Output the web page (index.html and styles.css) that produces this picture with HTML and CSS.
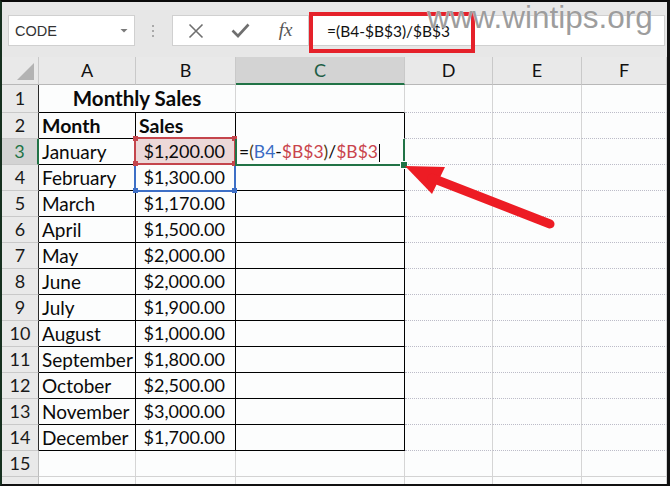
FILE: index.html
```html
<!DOCTYPE html>
<html>
<head>
<meta charset="utf-8">
<link rel="stylesheet" href="styles.css">
</head>
<body>
<div class="frame">
  <div class="toolbar">
    <div class="namebox"><span class="name">CODE</span><span class="caret"></span></div>
    <div class="grip"><i></i><i></i><i></i></div>
    <div class="fbtns">
      <span class="slot"><svg width="16" height="16" viewBox="0 0 16 16"><path d="M1.5 1.5 L14.5 14.5 M14.5 1.5 L1.5 14.5" stroke="#6f6f6f" stroke-width="1.6" fill="none"/></svg></span>
      <span class="slot"><svg width="19" height="15" viewBox="0 0 19 15"><path d="M1.5 7.5 L7 13 L17.5 1.5" stroke="#6f6f6f" stroke-width="2.6" fill="none"/></svg></span>
      <span class="slot fx">fx</span>
    </div>
    <div class="finput"><span class="ftext">=(B4-$B$3)/$B$3</span></div>
  </div>

  <div class="sheet">
    <div class="hd corner"><i class="tri"></i></div>
    <div class="hd">A</div><div class="hd">B</div><div class="hd sel">C</div><div class="hd">D</div><div class="hd">E</div><div class="hd">F</div>

    <div class="rh dk r1">1</div>
    <div class="c r1 mrg">Monthly Sales</div><div class="c r1 bb"></div><div class="c r1"></div><div class="c r1"></div><div class="c r1"></div>

    <div class="rh dk">2</div>
    <div class="c t b">Month</div><div class="c t b">Sales</div><div class="c t nob"></div><div class="c"></div><div class="c"></div><div class="c"></div>

    <div class="rh dk on">3</div>
    <div class="c t">January</div><div class="c t num pink">$1,200.00</div><div class="c t edit">=<span class="par">(</span><span class="blu">B4</span>-<span class="red">$B$3</span><span class="par">)</span>/<span class="red">$B$3</span></div><div class="c"></div><div class="c"></div><div class="c"></div>

    <div class="rh dk">4</div>
    <div class="c t">February</div><div class="c t num">$1,300.00</div><div class="c t"></div><div class="c"></div><div class="c"></div><div class="c"></div>

    <div class="rh dk">5</div>
    <div class="c t">March</div><div class="c t num">$1,170.00</div><div class="c t"></div><div class="c"></div><div class="c"></div><div class="c"></div>

    <div class="rh dk">6</div>
    <div class="c t">April</div><div class="c t num">$1,500.00</div><div class="c t"></div><div class="c"></div><div class="c"></div><div class="c"></div>

    <div class="rh dk">7</div>
    <div class="c t">May</div><div class="c t num">$2,000.00</div><div class="c t"></div><div class="c"></div><div class="c"></div><div class="c"></div>

    <div class="rh dk">8</div>
    <div class="c t">June</div><div class="c t num">$2,000.00</div><div class="c t"></div><div class="c"></div><div class="c"></div><div class="c"></div>

    <div class="rh dk">9</div>
    <div class="c t">July</div><div class="c t num">$1,900.00</div><div class="c t"></div><div class="c"></div><div class="c"></div><div class="c"></div>

    <div class="rh dk">10</div>
    <div class="c t">August</div><div class="c t num">$1,000.00</div><div class="c t"></div><div class="c"></div><div class="c"></div><div class="c"></div>

    <div class="rh dk">11</div>
    <div class="c t">September</div><div class="c t num">$1,800.00</div><div class="c t"></div><div class="c"></div><div class="c"></div><div class="c"></div>

    <div class="rh dk">12</div>
    <div class="c t">October</div><div class="c t num">$2,500.00</div><div class="c t"></div><div class="c"></div><div class="c"></div><div class="c"></div>

    <div class="rh dk">13</div>
    <div class="c t">November</div><div class="c t num">$3,000.00</div><div class="c t"></div><div class="c"></div><div class="c"></div><div class="c"></div>

    <div class="rh dk">14</div>
    <div class="c t">December</div><div class="c t num">$1,700.00</div><div class="c t"></div><div class="c"></div><div class="c"></div><div class="c"></div>

    <div class="rh">15</div>
    <div class="c s"></div><div class="c s"></div><div class="c s"></div><div class="c s"></div><div class="c s"></div><div class="c s"></div>

    <div class="rh last"></div>
    <div class="c last"></div><div class="c last"></div><div class="c last"></div><div class="c last"></div><div class="c last"></div><div class="c last"></div>
  </div>

  <div class="selbox blue"><i class="h bl"></i><i class="h br"></i></div>
  <div class="selbox redr"><i class="h tl"></i><i class="h tr"></i><i class="h bl"></i><i class="h br"></i></div>
  <div class="selbox green"><i class="fill"></i></div>
  <div class="cursor"></div>

  <div class="redbox"></div>
  <div class="watermark">www.wintips.org</div>

  <svg class="arrow" width="670" height="486" viewBox="0 0 670 486">
    <polygon points="405,166 445,167 432,194" fill="#ed1c24"/>
    <line x1="432" y1="178" x2="550" y2="224" stroke="#ed1c24" stroke-width="9" stroke-linecap="round"/>
  </svg>
</div>
</body>
</html>
```

FILE: styles.css
```css
html, body {
  margin: 0;
  padding: 0;
  background: #fff;
}

.frame {
  position: relative;
  width: 670px;
  height: 486px;
  box-sizing: border-box;
  border-top: 2px solid #0a0a0a;
  border-left: 2px solid #16301f;
  border-right: 3px solid #111;
  border-bottom: 2px solid #111;
  background: #e7e7e7;
  overflow: hidden;
  font-family: "Lato", "Carlito", sans-serif;
}

/* ---------- toolbar ---------- */
.toolbar {
  height: 55px;
  box-sizing: border-box;
  padding-top: 13px;
  display: flex;
  align-items: flex-start;
  background: #e7e7e7;
}

.namebox {
  margin-left: 6px;
  width: 127px;
  height: 31px;
  box-sizing: border-box;
  border: 1px solid #d0d0d0;
  background: #fff;
  display: flex;
  align-items: center;
  padding-left: 6px;
}

.name {
  font-family: "Liberation Sans", Arial, sans-serif;
  font-size: 14.5px;
  color: #333;
}

.caret {
  margin-left: auto;
  margin-right: 6px;
  width: 8px;
  height: 4px;
  background: #7a7a7a;
  clip-path: polygon(0 0, 100% 0, 50% 100%);
}

.grip {
  margin-left: 17px;
  margin-top: 10px;
  width: 2px;
  display: flex;
  flex-direction: column;
  gap: 3px;
}

.grip i {
  display: block;
  width: 2px;
  height: 2px;
  background: #a9a9a9;
}

.fbtns {
  margin-left: 18px;
  width: 137px;
  height: 31px;
  box-sizing: border-box;
  border: 1px solid #d0d0d0;
  background: #fff;
  display: flex;
}

.slot {
  width: 45px;
  display: flex;
  align-items: center;
  justify-content: center;
}

.fx {
  font-family: "Liberation Serif", "Times New Roman", serif;
  font-style: italic;
  font-size: 19px;
  color: #555;
  padding-bottom: 2px;
}

.finput {
  margin-left: 2px;
  margin-right: 2px;
  flex: 1;
  height: 31px;
  box-sizing: border-box;
  border: 1px solid #d0d0d0;
  background: #fff;
  padding-left: 15px;
  line-height: 29px;
}

.ftext {
  font-size: 15.5px;
  color: #111;
}

/* ---------- sheet grid ---------- */
.sheet {
  display: grid;
  grid-template-columns: 37px 97px 100px 169px 88px 89px 85px;
  grid-template-rows: 28px 28px repeat(14, 26px) 7px;
  font-size: 19px;
  color: #0a0a0a;
}

.hd {
  box-sizing: border-box;
  background: #e9e9e9;
  border-right: 1px solid #c9c9c9;
  border-bottom: 1px solid #b8b8b8;
  text-align: center;
  line-height: 27px;
  font-size: 18px;
  color: #111;
}

.hd.sel {
  background: #d3d3d3;
  border-bottom: 2px solid #217346;
  line-height: 26px;
  color: #1d5e45;
}

.corner {
  display: flex;
  justify-content: flex-end;
  align-items: flex-end;
  padding: 0 4px 4px 0;
}

.tri {
  display: block;
  width: 17px;
  height: 17px;
  background: #b3b3b3;
  clip-path: polygon(100% 0, 100% 100%, 0 100%);
}

.rh {
  box-sizing: border-box;
  background: #e9e9e9;
  border-right: 1px solid #bdbdbd;
  border-bottom: 1px solid #c9c9c9;
  text-align: center;
  line-height: 25px;
  font-size: 18px;
  color: #1a1a1a;
  overflow: hidden;
}

.rh.dk {
  border-right-color: #2a2a2a;
}

.rh.r1 {
  line-height: 27px;
}

.rh.on {
  background: #d3d3d3;
  color: #217346;
  border-right: 2px solid #217346;
}

.c {
  box-sizing: border-box;
  background: #fcfdfd;
  border-right: 1px solid #d5d5d5;
  border-bottom: 1px dotted #bcbcc8;
  padding: 0 3px;
  line-height: 25px;
  white-space: nowrap;
  overflow: hidden;
}

.c.r1 {
  line-height: 27px;
}

.mrg {
  grid-column: span 2;
  text-align: center;
  font-weight: bold;
  font-size: 20.5px;
  border-bottom: 1px solid #000;
}

.bb {
  border-bottom: 1px solid #000;
}

.t {
  border-right: 1px solid #000;
  border-bottom: 1px solid #000;
}

.t.nob {
  border-bottom-color: #fcfdfd;
}

.b {
  font-weight: bold;
  font-size: 19.5px;
}

.num {
  text-align: right;
  padding-right: 10px;
  font-size: 18px;
}

.pink {
  background: #ecd8d8;
}

.edit {
  font-size: 17.5px;
}

.edit .par {
  color: #4d3b12;
}

.edit .blu {
  color: #3a6cc4;
}

.edit .red {
  color: #c9444c;
}

.c.s {
  border-bottom: 1px solid #d3d3d3;
}

.c.last, .rh.last {
  border-bottom: none;
}

/* ---------- overlays ---------- */
.selbox {
  position: absolute;
  box-sizing: border-box;
}

.selbox .h {
  position: absolute;
  width: 5px;
  height: 5px;
}

.selbox .tl { left: -3px; top: -3px; }
.selbox .tr { right: -3px; top: -3px; }
.selbox .bl { left: -3px; bottom: -3px; }
.selbox .br { right: -3px; bottom: -3px; }

.blue {
  left: 132px;
  top: 161px;
  width: 102px;
  height: 29px;
  border: 2px solid #3d6fc6;
}

.blue .h {
  background: #3d6fc6;
}

.redr {
  left: 132px;
  top: 135px;
  width: 102px;
  height: 28px;
  border: 2px solid #c4454c;
}

.redr .h {
  background: #c4454c;
}

.green {
  left: 233px;
  top: 137px;
  width: 170px;
  height: 27px;
  border-left: 2px solid #217346;
  border-right: 2px solid #217346;
  border-bottom: 2px solid #217346;
}

.green .fill {
  position: absolute;
  right: -5px;
  bottom: -5px;
  width: 6px;
  height: 6px;
  background: #217346;
  border: 1px solid #fff;
}

.cursor {
  position: absolute;
  left: 377px;
  top: 142px;
  width: 1px;
  height: 18px;
  background: #000;
}

.redbox {
  position: absolute;
  left: 307px;
  top: 10px;
  width: 166px;
  height: 41px;
  box-sizing: border-box;
  border: 4px solid #e5212a;
}

.watermark {
  position: absolute;
  left: 425px;
  top: 0;
  font-family: "Liberation Sans", Arial, sans-serif;
  font-size: 31.5px;
  line-height: 31px;
  color: #9d9d9d;
  text-shadow: 0 0 1px #fff;
  white-space: nowrap;
}

.arrow {
  position: absolute;
  left: -2px;
  top: -2px;
  pointer-events: none;
}
```
